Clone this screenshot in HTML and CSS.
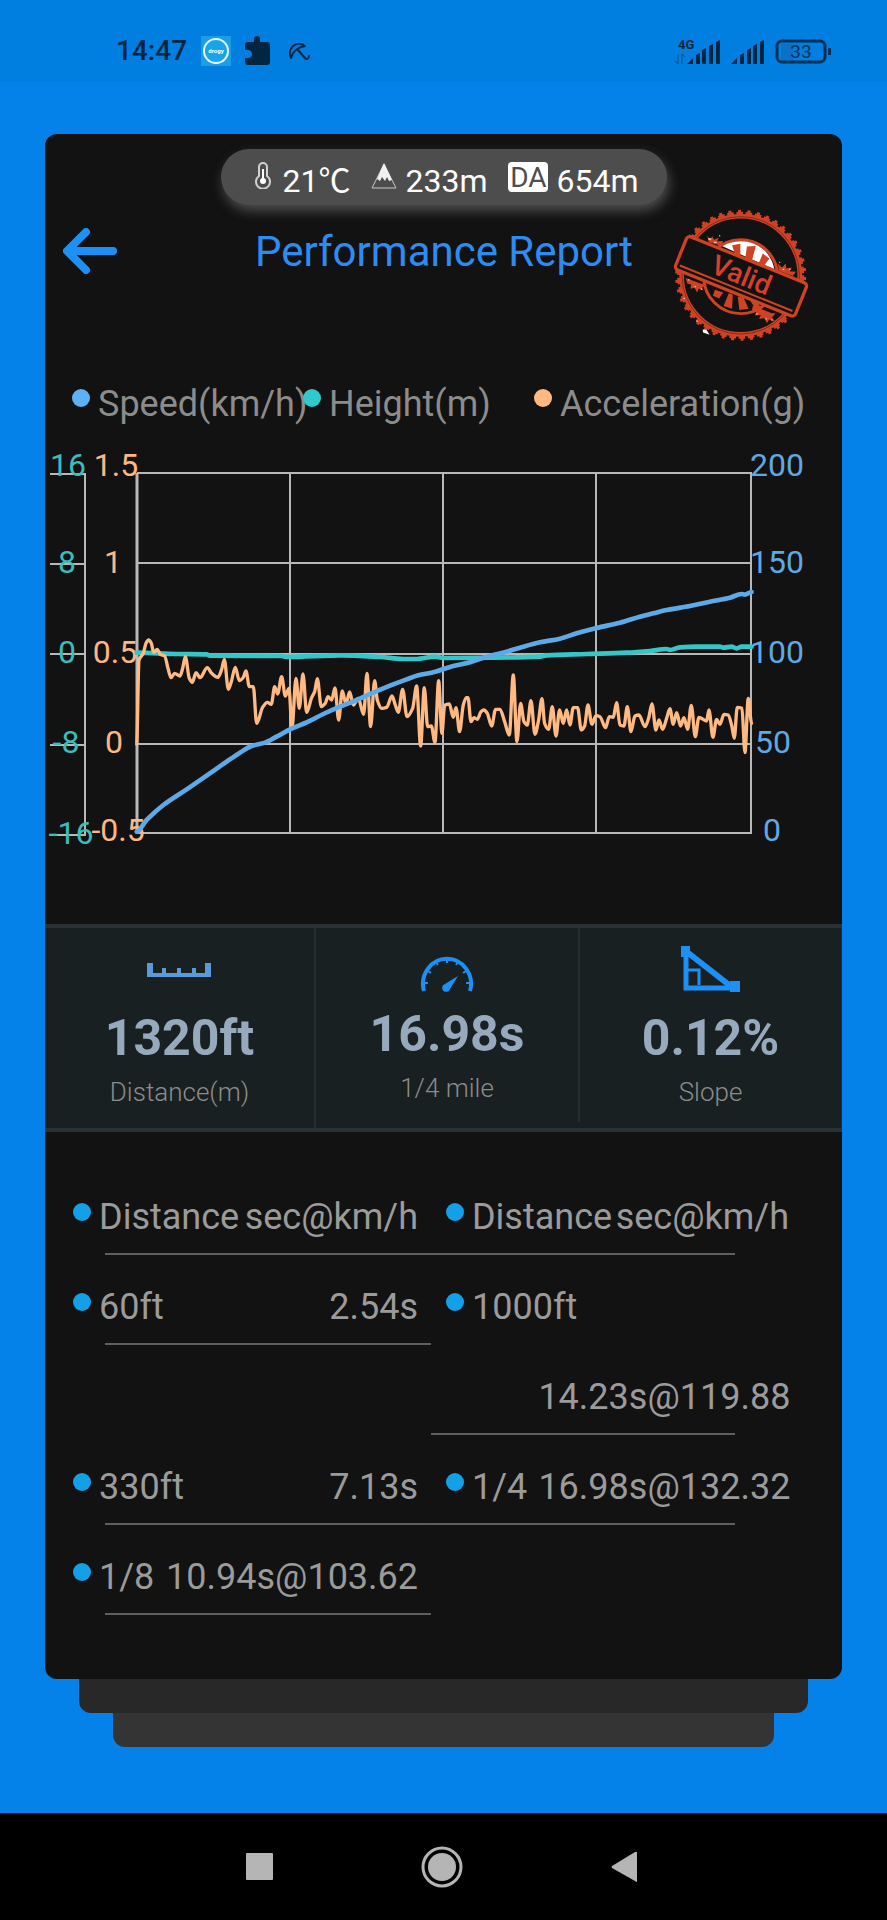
FILE: index.html
```html
<!DOCTYPE html>
<html lang="en">
<head>
    <meta charset="UTF-8">
    <meta name="viewport" content="width=device-width, initial-scale=1.0">
    <title>Performance Report</title>
    <link rel="stylesheet" href="styles.css">
</head>
<body>

    <!-- Status bar -->
    <div class="status-bar">
        <div class="status-left">
            <span class="clock">14:47</span>
            <svg class="app-icon" width="30" height="30" viewBox="0 0 30 30">
                <rect width="30" height="30" fill="#1a9fe6"/>
                <circle cx="15" cy="15" r="12" fill="#18a4e8" stroke="#e6f6ff" stroke-width="2"/>
                <text x="15" y="17" text-anchor="middle" font-size="6" font-weight="700" fill="#fff">drogy</text>
            </svg>
            <svg class="puzzle" width="25" height="30" viewBox="0 0 25 30">
                <path d="M3 6h6V3a3 3 0 0 1 6 0v3h7a3 3 0 0 1 3 3v17a3 3 0 0 1-3 3H3a3 3 0 0 1-3-3v-4c4 1 7-1 7-4s-3-5-7-4V9a3 3 0 0 1 3-3z" fill="#02263f"/>
            </svg>
            <svg class="umbrella" width="22" height="20" viewBox="0 0 22 20" fill="none" stroke="#02263f" stroke-width="2" stroke-linejoin="round" stroke-linecap="round">
                <path d="M3 17C-1 7 8-1 17 5c-6 1-12 5-14 12zM10 9l7 8c1 2 4 1 4-2"/>
            </svg>
        </div>
        <div class="status-right">
            <svg width="47" height="28" viewBox="0 0 47 28" fill="#02263f">
                <text x="4" y="12" font-size="13" font-weight="700">4G</text>
                <path d="M4 17v10l-3-3M8 27V17l3 3" fill="none" stroke="#0a4f8c" stroke-width="1"/>
                <path d="M13 27l6-6v6zM22 18l4-2v11h-4zM28 13l4-2v16h-4zM35 9l4-2v20h-4zM42 5l4-2v24h-4z"/>
            </svg>
            <svg width="34" height="28" viewBox="0 0 34 28" fill="#02263f">
                <path d="M0 27l6-6v6zM9 18l4-2v11H9zM16 13l4-2v16h-4zM22 9l4-2v20h-4zM29 5l4-2v24h-4z"/>
            </svg>
            <svg width="56" height="28" viewBox="0 0 56 28">
                <rect x="6" y="7" width="12" height="16" fill="#0872c6"/>
                <rect x="2" y="4" width="48" height="21" rx="5" fill="none" stroke="#053056" stroke-width="3"/>
                <rect x="53" y="11" width="3" height="7" fill="#053056"/>
                <text x="26" y="21" text-anchor="middle" font-size="19" fill="#053056">33</text>
            </svg>
        </div>
    </div>

    <div class="page">
        <div class="card">

            <!-- Weather / altitude -->
            <div class="weather">
                <span class="weather-item">
                    <svg width="16" height="27" viewBox="0 0 16 27" fill="none" stroke="#d0d0d0" stroke-width="2">
                        <path d="M4 14V5a4 4 0 0 1 8 0v9a7 7 0 1 1-8 0z"/>
                        <path d="M8 7v12" stroke="#fff"/>
                        <circle cx="8" cy="19" r="3" fill="#fff" stroke="none"/>
                    </svg>
                    21℃
                </span>
                <span class="weather-item mountain">
                    <svg width="26" height="27" viewBox="0 0 26 27">
                        <path d="M13 2L1 26h24z" fill="none" stroke="#c8c8c8" stroke-width="1"/>
                        <path d="M13 1L6 17l3 2 2-4 3 4 2-4 2 4 3-1z" fill="#f0f0f0"/>
                    </svg>
                    233m
                </span>
                <span class="weather-item density">
                    <span class="da">DA</span>
                    654m
                </span>
            </div>

            <div class="header">
                <button class="back" aria-label="Back">
                    <svg width="54" height="46" viewBox="0 0 54 46" fill="none" stroke="#1d90f5" stroke-width="8" stroke-linecap="round" stroke-linejoin="round">
                        <path d="M23 4L4 23l19 19M5 23h45"/>
                    </svg>
                </button>
                <h1>Performance Report</h1>
                <svg class="stamp" width="136" height="132" viewBox="40 25 408 400" fill="none" stroke="#cf4224">
                    <!-- toothed edge -->
                    <circle cx="243" cy="226" r="188" pathLength="1176" stroke-width="9" stroke-dasharray="20 8"/>
                    <circle cx="243" cy="226" r="194" pathLength="1176" stroke-width="9" stroke-dasharray="9 19" stroke-dashoffset="-5"/>
                    <circle cx="243" cy="226" r="179" stroke-width="14"/>
                    <circle cx="243" cy="226" r="178" stroke="#611f14" stroke-width="2"/>
                    <!-- upper half of the centre is lit -->
                    <path d="M181 135A108 108 0 0 1 345 208z" fill="#fff" stroke="none"/>
                    <circle cx="243" cy="230" r="112" stroke-width="9"/>
                    <path d="M217 135l25-5v45l-14-5zM262 139l27-2-12 45-20-8zM310 160l20 15-18 24-15-8zM165 270l25 8-12 18-19-8zM207 280l12 4-2 43-26-8zM234 290l18 4 15 33-28 4zM270 300l20 4 18 24-14 8z" fill="#cf4224" stroke="none"/>
                    <path d="M142 106l8 10 8-8 4 10 14-6-4 11 18-1-6 14-38-10zM356 190l12 12 12-12 1 15 17-3-7 12 20 1-10 13-42-16zM76 234l50 18 15 2-15 9 5 9-15-6-5 12-8-14-12 3 2-13-12-3zM280 318l55 22 14 2-11 11 8 12-17-5-6 11-8-15-16 2 5-12-18 2 5-12-14-4z" fill="#cf4224" stroke="none"/>
                    <path d="M145 116h9M162 126h8M178 106h3M370 208h5M390 208h4M360 187h3M84 240h4M103 260h4M122 268h4M70 296h4M108 365h5M290 343h4M318 358h4M336 362h4" stroke="#ffc4b4" stroke-width="4"/>
                    <path d="M128 390l11 1 10 15-20-7z" fill="#fff" stroke="none"/>
                    <g transform="translate(244 229) rotate(22)">
                        <rect x="-196" y="-54" width="392" height="108" rx="11" fill="#121212" stroke-width="10"/>
                        <path d="M-184 39h368" stroke-width="6"/>
                        <text x="0" y="25" text-anchor="middle" font-size="84" font-weight="500" fill="#d83e28" stroke="none">Valid</text>
                    </g>
                </svg>
            </div>

            <!-- Chart -->
            <ul class="legend">
                <li><span class="dot speed"></span>Speed(km/h)</li>
                <li><span class="dot height"></span>Height(m)</li>
                <li><span class="dot accel"></span>Acceleration(g)</li>
            </ul>

            <svg class="chart" viewBox="45 440 797 484" role="img" aria-label="Speed, height and acceleration">
                <g fill="none" stroke="#b8b8b8" stroke-width="2">
                    <path d="M137 473H752M137 563H752M137 654H752M137 744H752M137 833H752"/>
                    <path d="M290 473V833M443 473V833M596 473V833M751 473V833"/>
                    <path d="M137 473V833" stroke-width="3"/>
                    <path d="M50 474H85V835H50M50 564H85M50 654H85M50 745H85"/>
                </g>
                <g class="axis" fill="#3cbcbc">
                    <text x="68" y="476">16</text>
                    <text x="67" y="573">8</text>
                    <text x="67" y="663">0</text>
                    <text x="66" y="753">-8</text>
                    <text x="71" y="844">-16</text>
                </g>
                <g class="axis" fill="#fcb782">
                    <text x="116" y="476">1.5</text>
                    <text x="113" y="573">1</text>
                    <text x="115" y="663">0.5</text>
                    <text x="114" y="753">0</text>
                    <text x="118" y="841">-0.5</text>
                </g>
                <g class="axis" fill="#60a8e2">
                    <text x="777" y="476">200</text>
                    <text x="777" y="573">150</text>
                    <text x="777" y="663">100</text>
                    <text x="773" y="753">50</text>
                    <text x="772" y="841">0</text>
                </g>
                <g transform="translate(40 600) scale(.3333)" fill="none" stroke-linejoin="round" stroke-linecap="round">
                    <path id="heightLine" stroke="#34c6c8" stroke-width="14"/>
                    <path id="accelLine" stroke="#ffb982" stroke-width="10"/>
                    <path id="speedLine" stroke="#5cabe8" stroke-width="14"/>
                </g>
            </svg>

            <!-- Summary -->
            <div class="stats">
                <div class="stat">
                    <svg width="65" height="46" viewBox="0 0 65 46" fill="#5a9ad8">
                        <path d="M0 17h6v10h9v-5h4v5h11v-5h4v5h11v-5h4v5h9V17h6v14H0z"/>
                    </svg>
                    <strong>1320ft</strong>
                    <span>Distance(m)</span>
                </div>
                <div class="stat middle">
                    <svg width="54" height="42" viewBox="0 0 54 42" fill="none" stroke="#1d90f5" stroke-width="4">
                        <path d="M4 41a24 25 0 1 1 46 0"/>
                        <path d="M3 33h5M8 21l3 2M16 12l2 3M27 8v5M38 12l-2 3M46 21l-3 2M51 33h-5" stroke-width="2"/>
                        <path d="M38 26l-8 13a4 4 0 1 1-5-5z" fill="#1d90f5" stroke="none"/>
                    </svg>
                    <strong>16.98s</strong>
                    <span>1/4 mile</span>
                </div>
                <div class="stat">
                    <svg width="59" height="46" viewBox="0 0 59 46" fill="none" stroke="#1d90f5">
                        <path d="M5 4v38h50" stroke-width="5"/>
                        <path d="M6 6l46 36" stroke-width="6"/>
                        <path d="M5 24h13v15" stroke-width="3"/>
                        <path d="M0 0h9v11H0zM49 35h10v11H49z" fill="#1d90f5" stroke="none"/>
                    </svg>
                    <strong>0.12%</strong>
                    <span>Slope</span>
                </div>
            </div>

            <!-- Splits -->
            <table class="splits">
                <tr>
                    <th class="label"><span class="dot"></span>Distance</th>
                    <th class="value">sec@km/h</th>
                    <th class="label second"><span class="dot"></span>Distance</th>
                    <th class="value last">sec@km/h</th>
                </tr>
                <tr>
                    <td class="label"><span class="dot"></span>60ft</td>
                    <td class="value">2.54s</td>
                    <td class="label second open"><span class="dot"></span>1000ft</td>
                    <td class="open"></td>
                </tr>
                <tr>
                    <td class="open"></td>
                    <td class="open"></td>
                    <td class="second"></td>
                    <td class="value last">14.23s@119.88</td>
                </tr>
                <tr>
                    <td class="label"><span class="dot"></span>330ft</td>
                    <td class="value">7.13s</td>
                    <td class="label second"><span class="dot"></span>1/4</td>
                    <td class="value last">16.98s@132.32</td>
                </tr>
                <tr>
                    <td class="label"><span class="dot"></span>1/8</td>
                    <td class="value">10.94s@103.62</td>
                    <td class="open"></td>
                    <td class="open"></td>
                </tr>
            </table>
        </div>
        <div class="sheet sheet-one"></div>
        <div class="sheet sheet-two"></div>
    </div>

    <!-- System navigation -->
    <nav class="nav-bar">
        <button aria-label="Recent apps">
            <svg width="42" height="42" viewBox="0 0 42 42" fill="#b5b5b5"><rect x="8" y="7" width="27" height="27" rx="1"/></svg>
        </button>
        <button aria-label="Home">
            <svg width="42" height="42" viewBox="0 0 42 42" fill="#b5b5b5"><circle cx="21" cy="21" r="14"/><circle cx="21" cy="21" r="19" fill="none" stroke="#b5b5b5" stroke-width="3"/></svg>
        </button>
        <button aria-label="Back">
            <svg width="42" height="42" viewBox="0 0 42 42" fill="#b5b5b5"><path d="M33 7v28q0 2-2 0L8 22q-1-1 0-2L31 6q2-1 2 1z"/></svg>
        </button>
    </nav>

    <script>
        const heightData = "290,158 410,162 500,163 510,167 725,168 740,171 905,166 1020,171 1090,177 1130,177 1185,170 1210,174 1360,173 1500,170 1520,166 1640,162 1760,158 1830,153 1880,147 1890,150 1920,142 1970,140 2040,140 2050,143 2075,140 2090,145 2105,140 2135,140";
        const accelData = "290,432 297,180 310,160 318,130 326,120 334,130 341,157 352,148 361,163 374,168 384,205 393,233 404,220 420,228 428,205 436,170 448,235 457,247 468,218 480,233 502,203 515,220 534,232 545,208 553,178 565,268 574,245 586,202 598,242 610,232 618,213 628,260 640,260 650,370 668,322 682,307 694,313 704,260 713,282 725,230 736,288 747,265 756,385 768,235 778,325 789,222 800,337 815,293 824,275 832,236 844,320 856,310 864,290 875,300 885,264 896,360 907,273 918,312 929,276 940,315 955,295 971,343 981,220 992,380 1004,242 1012,300 1025,325 1040,322 1056,288 1066,315 1075,337 1088,268 1101,350 1118,325 1130,258 1142,438 1153,263 1163,380 1174,378 1185,427 1196,242 1206,400 1214,316 1228,312 1240,352 1248,323 1259,395 1270,315 1279,293 1284,293 1293,365 1302,353 1312,358 1323,335 1332,330 1342,340 1355,378 1367,328 1380,328 1394,365 1408,405 1420,225 1431,425 1442,310 1452,365 1462,375 1473,302 1485,403 1496,360 1506,296 1514,370 1526,388 1537,320 1548,408 1559,330 1570,370 1580,330 1590,375 1600,323 1613,323 1624,390 1634,378 1644,315 1656,373 1668,347 1680,350 1697,383 1708,350 1720,352 1730,308 1740,375 1752,378 1762,320 1773,395 1785,348 1797,345 1815,380 1826,355 1836,312 1848,390 1857,360 1868,388 1880,355 1890,326 1900,373 1910,338 1922,378 1932,353 1943,388 1954,316 1966,410 1977,352 2000,363 2007,330 2019,412 2030,358 2040,373 2052,343 2065,345 2075,375 2083,415 2092,322 2106,325 2115,458 2125,295 2135,370";
        const speedData = "290,695 320,660 370,615 440,568 500,527 560,485 600,458 635,438 675,428 710,410 750,388 800,367 850,342 900,320 950,300 1000,278 1050,257 1100,238 1135,226 1180,217 1240,198 1290,187 1340,170 1400,155 1440,143 1500,127 1560,116 1610,100 1670,84 1740,68 1800,50 1840,40 1880,30 1950,18 2010,5 2070,-7 2105,-18 2115,-16 2135,-24";

        // Smooth line that never overshoots a sample
        function drawLine(id, data) {
            const p = data.split(" ").map(s => s.split(",").map(Number));
            const step = i => (p[i + 1][1] - p[i][1]) / (p[i + 1][0] - p[i][0]);
            const slope = p.map((_, i) => {
                if (i === 0 || i === p.length - 1) return 0;
                const a = step(i - 1), b = step(i);
                return a * b <= 0 ? 0 : 2 * a * b / (a + b);
            });
            let d = "M" + p[0];
            for (let i = 1; i < p.length; i++) {
                const w = (p[i][0] - p[i - 1][0]) / 3;
                d += "C" + [p[i - 1][0] + w, p[i - 1][1] + w * slope[i - 1], p[i][0] - w, p[i][1] - w * slope[i], p[i][0], p[i][1]];
            }
            document.getElementById(id).setAttribute("d", d);
        }

        drawLine("heightLine", heightData);
        drawLine("accelLine", accelData);
        drawLine("speedLine", speedData);
    </script>

</body>
</html>
```
FILE: styles.css
```css
* {
    box-sizing: border-box;
}
body {
    margin: 0;
    min-height: 100vh;
    display: flex;
    flex-direction: column;
    font-family: Roboto, "Noto Sans CJK SC", sans-serif;
    background-color: #0482ea;
}
svg {
    display: block;
    flex: none;
}
button {
    background: none;
    border: none;
    padding: 0;
    cursor: pointer;
}

/* status bar */
.status-bar {
    display: flex;
    justify-content: space-between;
    align-items: center;
    height: 82px;
    padding: 20px 56px 0 116px;
    background-color: #007fe0;
    color: #02263f;
}
.status-left, .status-right {
    display: flex;
    align-items: center;
}
.status-left {
    gap: 14px;
}
.status-right {
    gap: 10px;
}
.clock {
    font-size: 28px;
    font-weight: 500;
    line-height: 32px;
}
.umbrella {
    margin-left: 4px;
}

/* card */
.page {
    flex: 1;
    padding: 52px 45px 0;
}
.card {
    background-color: #121212;
    border-radius: 12px;
    padding: 15px 0 64px;
}
.sheet {
    height: 34px;
    border-radius: 0 0 12px 12px;
}
.sheet-one {
    margin: 0 34px;
    background-color: #282828;
}
.sheet-two {
    margin: 0 68px;
    background-color: #343434;
}

.weather {
    display: flex;
    align-items: center;
    width: 446px;
    height: 56px;
    margin: 0 auto;
    padding: 0 28px 0 34px;
    justify-content: space-between;
    border-radius: 28px;
    background-color: #4d4d4d;
    box-shadow: 2px 6px 12px #4d4d4d;
    color: #fff;
    font-size: 32px;
    line-height: 38px;
}
.weather-item {
    display: flex;
    align-items: flex-start;
    gap: 12px;
    padding-top: 8px;
    white-space: nowrap;
}
.mountain, .density {
    gap: 8px;
}
.da {
    width: 40px;
    height: 30px;
    border-radius: 4px;
    background-color: #fff;
    color: #4d4d4d;
    font-size: 28px;
    line-height: 31px;
    text-align: center;
}

.header {
    display: grid;
    grid-template-columns: 1fr auto 1fr;
    align-items: start;
    padding: 4px 33px 0 18px;
}
.back {
    justify-self: start;
    margin-top: 19px;
}
h1 {
    margin: 18px 0 0 16px;
    color: #2e8cf0;
    font-size: 42px;
    font-weight: 400;
    line-height: 50px;
}
.stamp {
    justify-self: end;
}

/* chart */
.dot {
    flex: none;
    display: inline-block;
    width: 18px;
    height: 18px;
    border-radius: 50%;
    background-color: #12a1e8;
}
.legend {
    display: grid;
    grid-template-columns: repeat(3, 1fr);
    margin: 42px 77px 0 27px;
    padding: 0;
    list-style: none;
    color: #8c8c8c;
    font-size: 36px;
    line-height: 42px;
    white-space: nowrap;
}
.legend li {
    display: flex;
    gap: 8px;
    min-width: 0;
}
.legend .dot {
    margin-top: 6px;
}
.speed {
    background-color: #5eb1f3;
}
.height {
    background-color: #30c8ca;
}
.accel {
    background-color: #ffb981;
}
.chart {
    width: 100%;
    margin-top: 15px;
}
.axis {
    font-size: 32px;
    text-anchor: middle;
}

/* summary */
.stats {
    display: grid;
    grid-template-columns: 271fr 264fr 262fr;
    height: 208px;
    border-top: 4px solid #2a3134;
    border-bottom: 4px solid #2a3134;
    background-color: #192021;
}
.stat {
    display: flex;
    flex-direction: column;
    align-items: center;
    padding-top: 18px;
    border-right: 2px solid #262e30;
}
.middle {
    padding-top: 22px;
    margin-bottom: 6px;
}
.stat:last-child {
    border-right-width: 1px;
}
.stat strong {
    margin-top: 15px;
    color: #97a9bc;
    font-size: 50px;
    line-height: 62px;
}
.middle strong {
    margin-top: 11px;
}
.stat span {
    margin-top: 7px;
    color: #8c8c8c;
    font-size: 26px;
    font-weight: 300;
    line-height: 32px;
}

/* splits */
.splits {
    table-layout: fixed;
    width: calc(100% - 81px);
    margin: 33px 53px 0 28px;
    border-collapse: collapse;
    color: #9b9b9b;
    font-size: 36px;
    line-height: 42px;
    white-space: nowrap;
}
.splits tr {
    height: 90px;
}
.splits th, .splits td {
    width: 37%;
    padding: 14px 0 0;
    font-weight: 400;
    text-align: left;
    background: linear-gradient(#5f5f5f, #5f5f5f) right bottom / 100% 2px no-repeat;
}
.splits th:first-child, .splits td:first-child {
    width: 13%;
    background-size: calc(100% - 32px) 2px;
}
.splits .second {
    width: 15%;
    padding-left: 15px;
}
.splits .value {
    padding-right: 13px;
    text-align: right;
}
.splits .last {
    width: 35%;
    padding-right: 0;
    background-position: left bottom;
    background-size: calc(100% - 54px) 2px;
}
.splits .open {
    background: none;
}
.splits .dot {
    margin-right: 8px;
    vertical-align: 8px;
}

/* system navigation */
.nav-bar {
    display: flex;
    justify-content: center;
    align-items: center;
    gap: 141px;
    height: 107px;
    padding-right: 3px;
    background-color: #000;
}
```
